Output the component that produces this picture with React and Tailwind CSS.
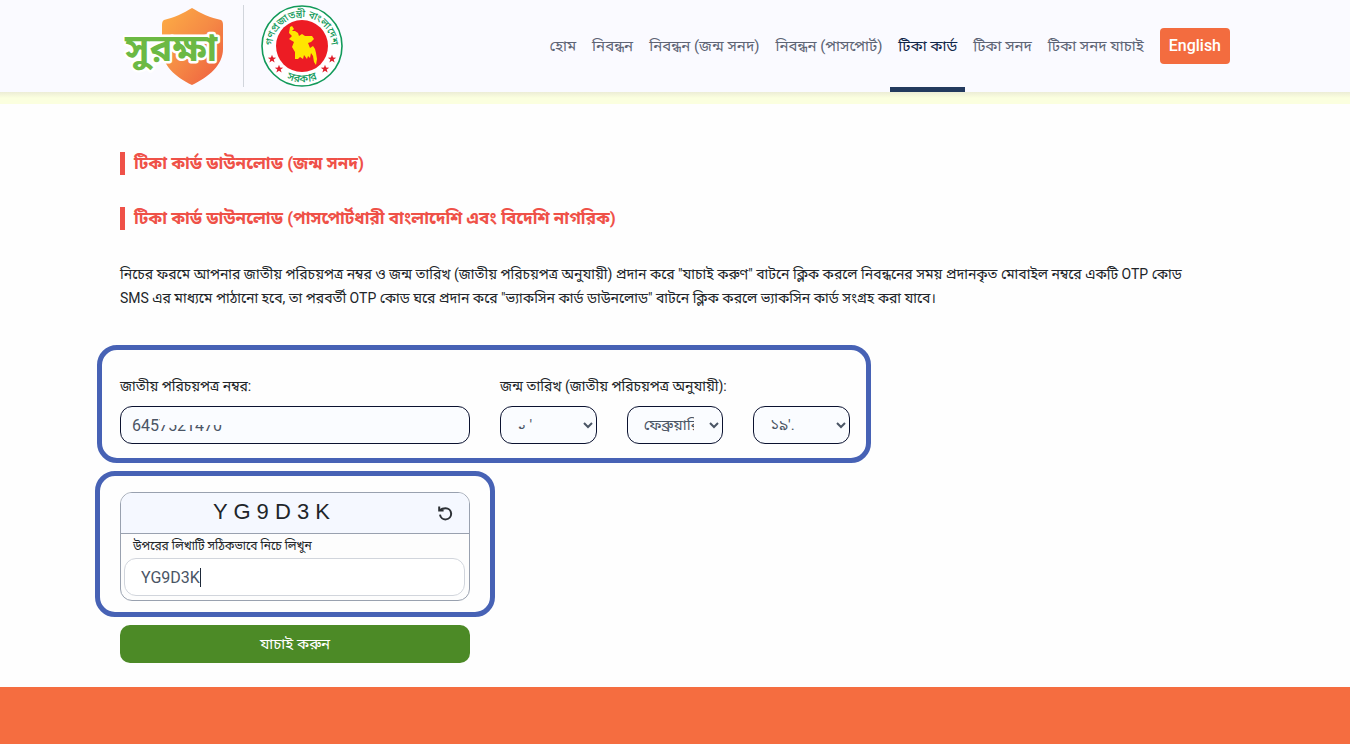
import { useState } from 'react';

const NAV_LINKS = [
  { label: 'হোম' },
  { label: 'নিবন্ধন' },
  { label: 'নিবন্ধন (জন্ম সনদ)' },
  { label: 'নিবন্ধন (পাসপোর্ট)' },
  { label: 'টিকা কার্ড', active: true },
  { label: 'টিকা সনদ' },
  { label: 'টিকা সনদ যাচাই' },
];

const fieldClass =
  'w-full h-[38px] px-[11px] border border-[#0b1230] rounded-xl bg-[#fafcff] text-base text-gray-600';

const selectClass =
  'w-full h-[38px] px-3 border border-[#0b1230] rounded-xl bg-[#fafcff] text-[15px] text-gray-600';

const SurokkhaLogo = () => (
  <svg className="w-[102px] h-[80px]" viewBox="0 0 102 80" role="img" aria-label="সুরক্ষা">
    <defs>
      <linearGradient id="shield" x1="0" y1="0" x2="1" y2="1">
        <stop offset="0" stopColor="#fdae45" />
        <stop offset="0.5" stopColor="#f58a45" />
        <stop offset="1" stopColor="#ee5a40" />
      </linearGradient>
    </defs>
    <path
      d="M69 2 C77 7 88 12 98 14 Q100 15 100 19 V43 C100 59 86 71 69 79 C52 71 39 59 39 43 V19 Q39 15 41 14 C50 12 61 7 69 2Z"
      fill="url(#shield)"
    />
    <g fontSize="38" fontWeight="bold" strokeLinejoin="round">
      <text x="2" y="55" fill="#fff" stroke="#fff" strokeWidth="5">সুরক্ষা</text>
      <text x="2" y="55" fill="#6cb944">সুরক্ষা</text>
    </g>
  </svg>
);

const Star = ({ x, y }) => (
  <path
    transform={`translate(${x} ${y}) scale(1.2)`}
    d="M0 -3.6 L0.9 -1.2 L3.5 -1.1 L1.4 0.5 L2.2 3 L0 1.5 L-2.2 3 L-1.4 0.5 L-3.5 -1.1 L-0.9 -1.2Z"
    fill="#e0202c"
  />
);

const GovernmentSeal = () => (
  <svg className="w-[82px] h-[82px]" viewBox="0 0 82 82" role="img" aria-label="গণপ্রজাতন্ত্রী বাংলাদেশ সরকার">
    <defs>
      <path id="sealTop" d="M12 47 A29.5 29.5 0 1 1 70 47" />
      <path id="sealBottom" d="M18 69 A36 36 0 0 0 64 69" />
    </defs>
    <circle cx="41" cy="41" r="40" fill="#fff" stroke="#129a5a" strokeWidth="1.6" />
    <circle cx="41" cy="41" r="26" fill="#ed1c24" />
    <path
      d="M29 22 L31 21 L33 24 L31 26 L34 26 L37 28 L38 31 L41 29 L44 31 L51 31 L53 34 L50 37 L47 38 L49 43 L52 41 L54 44 L55 48 L56 54 L55 60 L53 57 L52 51 L50 48 L49 53 L47 51 L46 54 L43 50 L42 54 L39 52 L37 54 L34 54 L34 47 L31 42 L33 37 L28 34 L31 31 L28 28Z"
      fill="#ffe600"
    />
    <Star x={11} y={54} />
    <Star x={18} y={64} />
    <Star x={71} y={54} />
    <Star x={64} y={64} />
    <g fontWeight="500" fill="#129a5a" textAnchor="middle">
      <text fontSize="10">
        <textPath href="#sealTop" startOffset="50%">গণপ্রজাতন্ত্রী বাংলাদেশ</textPath>
      </text>
      <text fontSize="11">
        <textPath href="#sealBottom" startOffset="50%">সরকার</textPath>
      </text>
    </g>
  </svg>
);

const ReloadIcon = () => (
  <svg className="w-4 h-4" viewBox="0 0 16 16" fill="none" stroke="#2c3035" strokeWidth="2">
    <path d="M3 5 Q5 3.2 8.5 3.2 A5.6 5.6 0 1 1 3 9.6" />
    <path d="M2.2 1.5 V5.4 H6.6" />
  </svg>
);

const Header = () => (
  <header className="bg-[#fafaff]">
    <div className="max-w-[1120px] h-[92px] mx-auto pl-2 pr-[5px] flex items-center justify-between">
      <a href="#home" className="flex items-center">
        <SurokkhaLogo />
        <span className="w-px h-[82px] ml-[18px] mr-[17px] bg-gray-300" />
        <GovernmentSeal />
      </a>
      <nav className="h-full flex items-center">
        {NAV_LINKS.map((link) => (
          <a
            key={link.label}
            href="#nav"
            className={
              link.active
                ? 'h-full px-2 pt-[5px] flex items-center border-b-[5px] border-[#233a5e] text-[15px] text-[#0f2547]'
                : 'h-full px-2 flex items-center text-[15px] text-[#5d6475]'
            }
          >
            {link.label}
          </a>
        ))}
        <button className="h-9 ml-2 px-[9px] rounded bg-[#f36c3f] text-white font-medium">English</button>
      </nav>
    </div>
    <div className="h-[12px] bg-linear-to-b from-[#ecedd6] to-[#fbffdf] to-50%" />
  </header>
);

const App = () => {
  const [nid, setNid] = useState('6457521470');
  const [captcha, setCaptcha] = useState('YG9D3K');

  return (
    <div className="min-h-screen flex flex-col bg-[#fefefe] text-base text-[#212529] font-['Roboto','Noto_Sans_Bengali',sans-serif]">
      <Header />

      <main className="w-full max-w-[1110px] mx-auto pt-12 pb-6">
        <h2 className="mb-8 pl-[9px] border-l-[5px] border-[#ef5148] text-[17px] leading-[23px] font-bold text-[#ef5148]">
          টিকা কার্ড ডাউনলোড (জন্ম সনদ)
        </h2>
        <h2 className="mb-8 pl-[9px] border-l-[5px] border-[#ef5148] text-[17px] leading-[23px] font-bold text-[#ef5148]">
          টিকা কার্ড ডাউনলোড (পাসপোর্টধারী বাংলাদেশি এবং বিদেশি নাগরিক)
        </h2>

        <p className="pr-5 text-[14px] leading-6">
          নিচের ফরমে আপনার জাতীয় পরিচয়পত্র নম্বর ও জন্ম তারিখ (জাতীয় পরিচয়পত্র অনুযায়ী) প্রদান করে "যাচাই করুণ" বাটনে ক্লিক করলে নিবন্ধনের সময় প্রদানকৃত মোবাইল নম্বরে একটি OTP কোড SMS এর মাধ্যমে পাঠানো হবে, তা পরবর্তী OTP কোড ঘরে প্রদান করে "ভ্যাকসিন কার্ড ডাউনলোড" বাটনে ক্লিক করলে ভ্যাকসিন কার্ড সংগ্রহ করা যাবে।
        </p>

        <form onSubmit={(e) => e.preventDefault()}>
          {/* Identity */}
          <div className="w-[774px] mt-[35px] -ml-[23px] pl-[18px] pr-4 pt-6 pb-[14px] grid grid-cols-2 gap-[30px] border-[5px] border-[#4762b5] rounded-[20px]">
            <div>
              <label htmlFor="nid" className="block mb-2 text-[14px] leading-6">জাতীয় পরিচয়পত্র নম্বর:</label>
              <div className="relative">
                <input
                  id="nid"
                  value={nid}
                  onChange={(e) => setNid(e.target.value)}
                  className={fieldClass}
                />
                <span className="absolute left-10 top-2 w-[66px] h-[11px] bg-[#fafcff]" />
              </div>
            </div>
            <fieldset>
              <legend className="mb-2 text-[14px] leading-6">জন্ম তারিখ (জাতীয় পরিচয়পত্র অনুযায়ী):</legend>
              <div className="grid grid-cols-3 gap-[30px]">
                <div className="relative">
                  <select aria-label="দিন" className={selectClass}>
                    <option>১ '</option>
                  </select>
                  <span className="absolute left-4 top-2 w-3 h-[11px] bg-[#fafcff]" />
                </div>
                <select aria-label="মাস" className={selectClass}>
                  <option>ফেব্রুয়ারি</option>
                </select>
                <select aria-label="বছর" className={selectClass}>
                  <option>১৯'.</option>
                </select>
              </div>
            </fieldset>
          </div>

          {/* Captcha */}
          <div className="w-[400px] mt-2 -ml-[25px] px-5 pt-4 pb-[11px] border-[5px] border-[#4762b5] rounded-[20px]">
            <div className="border border-gray-400 rounded-xl overflow-hidden bg-[#fdfdfd]">
              <div className="h-[41px] pl-[92px] pr-4 flex items-center justify-between border-b border-gray-400 bg-[#f5f8ff]">
                <span className="pb-0.5 text-[22px] leading-8 font-['Liberation_Sans',Arial,sans-serif] whitespace-pre">Y G 9 D 3 K</span>
                <button type="button" aria-label="Reload">
                  <ReloadIcon />
                </button>
              </div>
              <label htmlFor="captcha" className="block pl-3 text-[12px] leading-6">উপরের লিখাটি সঠিকভাবে নিচে লিখুন</label>
              <div className="relative pl-[3px] pr-1 pb-1">
                <input
                  id="captcha"
                  value={captcha}
                  onChange={(e) => setCaptcha(e.target.value)}
                  className="w-full h-[38px] px-4 border border-gray-300 rounded-xl bg-white text-gray-600 caret-transparent outline-none"
                />
                {/* text cursor */}
                <span className="absolute left-[79px] top-[10px] w-px h-[19px] bg-gray-800" />
              </div>
            </div>
          </div>

          <button className="w-[350px] h-[38px] mt-2 rounded-[10px] bg-[#4c8a26] text-[15px] text-white">যাচাই করুন</button>
        </form>
      </main>

      <footer className="grow bg-[#f56d40]" />
    </div>
  );
};

export default App;
